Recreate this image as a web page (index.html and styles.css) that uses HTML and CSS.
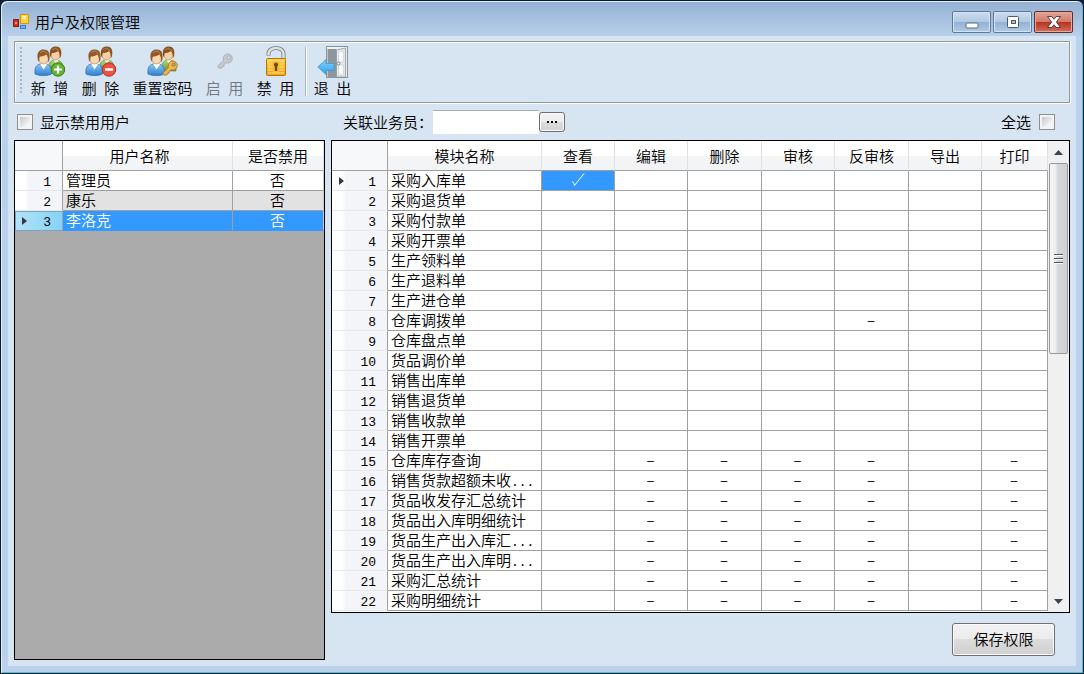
FILE: index.html
```html
<!DOCTYPE html>
<html lang="zh-CN">
<head>
<meta charset="utf-8">
<title>用户及权限管理</title>
<link rel="stylesheet" href="styles.css">
</head>
<body>
<svg class="defs" width="0" height="0" aria-hidden="true">
  <defs>
    <linearGradient id="blueBody" x1="0" y1="0" x2="0" y2="1"><stop offset="0" stop-color="#8cc8f4"/><stop offset="1" stop-color="#2f7fd0"/></linearGradient>
    <linearGradient id="greenBody" x1="0" y1="0" x2="0" y2="1"><stop offset="0" stop-color="#b4dc7c"/><stop offset="1" stop-color="#5d9a34"/></linearGradient>
    <linearGradient id="gold" x1="0" y1="0" x2="0" y2="1"><stop offset="0" stop-color="#ffd24a"/><stop offset="1" stop-color="#f0a010"/></linearGradient>
    <linearGradient id="arrowBlue" x1="0" y1="0" x2="0" y2="1"><stop offset="0" stop-color="#8ad4fc"/><stop offset="1" stop-color="#2f9ee6"/></linearGradient>
    <symbol id="users" viewBox="0 0 32 32">
      <path d="M15 25c-1-7 1-10 5-11h3c4 1 6 3 6 8v3z" fill="url(#greenBody)" stroke="#5a8a3a" stroke-width=".7"/>
      <path d="M19 13l3 5 3-5z" fill="#f4f4ec"/>
      <ellipse cx="21.500" cy="8.500" rx="4.600" ry="5.500" fill="#f6cfa0" stroke="#a87038" stroke-width=".5"/>
      <path d="M16 9c-1-6 2-8.500 6-8.500s6 3 5.200 8.500c-.4 2-1 3-1.400 3 .2-3-.3-5-1.800-7-2 1.500-4 2-6 2-.8 1-.8 3-.8 4-.8 0-1-1-1.200-2z" fill="#8a5425"/>
      <path d="M18 4c2-2 5-2 7 1" fill="none" stroke="#bd8750" stroke-width="1"/>
      <path d="M1 28c-.6-6 1-9 5-10h6c4 1 6 4 5.500 10-4 2-12 2-16.500 0z" fill="url(#blueBody)" stroke="#2868ac" stroke-width=".7"/>
      <path d="M6 17.500l3.500 6 4-6z" fill="#fff"/>
      <ellipse cx="9.500" cy="12" rx="5" ry="6" fill="#fad6aa" stroke="#a87038" stroke-width=".5"/>
      <path d="M3.700 13c-1.200-7 1.800-9.500 6-9.500 4.500 0 6.600 3 5.800 9.500-.3 2-.9 3-1.400 3 .2-3-.2-5.500-1.800-7.500-2 1.500-4.300 2-6.300 2-.8 1-.8 3.500-.8 5-.8 0-1.200-1.200-1.500-2.500z" fill="#8f5a2b"/>
      <path d="M6 7c2-2.500 5-2.500 7 .5" fill="none" stroke="#c38d55" stroke-width="1"/>
    </symbol>
    <symbol id="keyshape" viewBox="0 0 16 16">
      <path fill-rule="evenodd" d="M10.500 1c2.800 0 4.800 2 4.800 4.500S13.300 10 10.700 10c-.7 0-1.200-.1-1.700-.3L7.300 11.500l-.3 1.700-1.600.1-.3 1.500-3.100.4-1-1 .2-1.700 5.200-5C5.500 4 7.700 1 10.500 1zm1.200 2a1.600 1.600 0 1 0 0 3.200 1.600 1.600 0 0 0 0-3.200z"/>
    </symbol>
  </defs>
</svg>
<div class="window">
  <header class="titlebar">
    <svg class="app-icon" width="17" height="16" viewBox="0 0 17 16" aria-hidden="true">
      <rect x=".5" y="5.500" width="5" height="7" fill="#c8321e" stroke="#8c1c10"/>
      <rect x="2" y="8" width="2" height="2" fill="#f49a80"/>
      <rect x="7.500" y=".5" width="8" height="9" fill="#ffd23c" stroke="#d29a10"/>
      <rect x="9" y="2" width="4" height="3" fill="#fff0a0"/>
      <rect x="7.500" y="11.500" width="5" height="3" fill="#6ab0f0" stroke="#3a7ac8"/>
    </svg>
    <h1 class="title">用户及权限管理</h1>
    <div class="window-buttons">
      <button class="wbtn" type="button" aria-label="最小化"><svg width="14" height="14" viewBox="0 0 14 14"><rect x="1" y="8" width="12" height="5" rx="1" fill="#fff" stroke="#5b6b80"/></svg></button>
      <button class="wbtn" type="button" aria-label="最大化"><svg width="14" height="14" viewBox="0 0 14 14"><rect x="1.500" y="1.500" width="11" height="11" rx="1" fill="#fff" stroke="#4b5a70"/><rect x="5.500" y="5.500" width="4" height="3" fill="#a8bcd6" stroke="#4d5a6c"/></svg></button>
      <button class="wbtn wbtn-close" type="button" aria-label="关闭"><svg width="14" height="14" viewBox="0 0 14 14"><path d="M.5 1.500h4.300L7 4.200l2.200-2.700h4.300L9.400 7l4.100 5.500H9.200L7 9.800l-2.200 2.700H.5L4.600 7z" fill="#fff" stroke="#5e2a2a" stroke-width=".9"/></svg></button>
    </div>
  </header>

  <main class="client">
    <div class="toolbar" role="toolbar" aria-label="工具栏">
      <span class="grip"></span>
      <button class="tool" type="button">
        <svg width="32" height="32" viewBox="0 0 32 32"><use href="#users"/><circle cx="24" cy="23.500" r="6.700" fill="#62b52c" stroke="#3a7c18"/><path d="M24 19.500v8M20 23.500h8" stroke="#fff" stroke-width="2.200"/></svg>
        <span>新&ensp;增</span>
      </button>
      <button class="tool" type="button">
        <svg width="32" height="32" viewBox="0 0 32 32"><use href="#users"/><circle cx="24" cy="23.500" r="6.700" fill="#ea5446" stroke="#b42c22"/><path d="M20 23.500h8" stroke="#fff" stroke-width="2.400"/></svg>
        <span>删&ensp;除</span>
      </button>
      <button class="tool tool-wide" type="button">
        <svg width="32" height="32" viewBox="0 0 32 32"><use href="#users"/><use href="#keyshape" x="15" y="14" width="16" height="16" fill="#f0b450" stroke="#a66c1c" stroke-width=".8"/></svg>
        <span>重置密码</span>
      </button>
      <button class="tool" type="button" disabled>
        <svg width="32" height="32" viewBox="0 0 32 32"><use href="#keyshape" x="8" y="7" width="16" height="16" fill="#c6c9cd" stroke="#a3a7ac" stroke-width=".8"/></svg>
        <span>启&ensp;用</span>
      </button>
      <button class="tool" type="button">
        <svg width="32" height="32" viewBox="0 0 32 32"><path d="M8.500 9.500V8c0-8 15-8 15 0v5" fill="none" stroke="#777d84" stroke-width="4"/><path d="M8.500 9V8c0-8 15-8 15 0v5" fill="none" stroke="#dfe3e7" stroke-width="2.400"/><rect x="6.500" y="12.500" width="19" height="17" rx="1" fill="url(#gold)" stroke="#b87808"/><path d="M8 15h16M8 18h16M8 21h16M8 24h16M8 27h16" stroke="#ffe28a" stroke-width="1"/><rect x="12.500" y="15" width="7" height="11" fill="#fbbd28"/><path d="M16 16.500a2.200 2.200 0 0 1 1.200 4v4.500h-2.400v-4.500a2.200 2.200 0 0 1 1.200-4z" fill="#70480a"/></svg>
        <span>禁&ensp;用</span>
      </button>
      <span class="separator"></span>
      <button class="tool" type="button">
        <svg width="32" height="32" viewBox="0 0 32 32"><rect x="9.500" y=".5" width="21" height="31" fill="#eef1f2" stroke="#8a959a"/><rect x="10.500" y="3" width="9" height="28" fill="#8d979b"/><path d="M19.500 4l9-2v29h-9z" fill="#e4e9ea" stroke="#8a959a" stroke-width=".8"/><path d="M21.500 6l5-1v11h-5zM21.500 19h5v10h-5z" fill="#f8fafa" stroke="#c3cacc" stroke-width=".6"/><circle cx="21.500" cy="17.500" r="1.500" fill="#fff" stroke="#657076" stroke-width=".8"/><path d="M.8 21L9 13.500v4h8v7H9v4z" fill="url(#arrowBlue)" stroke="#3b9ad8" stroke-width=".8"/></svg>
        <span>退&ensp;出</span>
      </button>
    </div>

    <div class="columns">
      <section class="users-pane">
        <div class="filter filter-left">
          <input class="check" type="checkbox" id="showDisabled"><label for="showDisabled">显示禁用用户</label>
        </div>
        <div class="grid-box users-box">
          <table class="grid users">
            <colgroup><col class="u-num"><col class="u-name"><col class="u-off"></colgroup>
            <thead><tr><th></th><th class="sortable">用户名称</th><th>是否禁用</th></tr></thead>
            <tbody>
              <tr><th scope="row">1</th><td>管理员</td><td class="c">否</td></tr>
              <tr class="alt"><th scope="row">2</th><td>康乐</td><td class="c">否</td></tr>
              <tr class="selected"><th scope="row"><i class="marker"></i>3</th><td>李洛克</td><td class="c">否</td></tr>
            </tbody>
          </table>
        </div>
      </section>

      <section class="rights-pane">
        <div class="filter filter-right">
          <label for="salesman">关联业务员：</label>
          <input class="field" type="text" id="salesman">
          <button class="browse" type="button" aria-label="选择业务员"><svg width="12" height="4" viewBox="0 0 12 4"><path d="M1 1h2v2H1zM5 1h2v2H5zM9 1h2v2H9z"/></svg></button>
          <span class="select-all"><label for="all">全选</label><input class="check" type="checkbox" id="all"></span>
        </div>
        <div class="grid-box rights-box">
          <table class="grid rights">
            <colgroup><col class="r-num"><col class="r-name"><col class="r-a"><col class="r-a"><col class="r-b"><col class="r-a"><col class="r-b"><col class="r-a"><col class="r-end"></colgroup>
            <thead><tr><th></th><th>模块名称</th><th>查看</th><th>编辑</th><th>删除</th><th>审核</th><th>反审核</th><th>导出</th><th>打印</th></tr></thead>
            <tbody>
              <tr><th scope="row"><i class="marker"></i>1</th><td>采购入库单</td><td class="c current"><svg class="tick" width="14" height="15" viewBox="0 0 14 15" role="img" aria-label="有权限"><path d="M1 9.500c1.200.5 2 1.500 2.500 4L13 1.500" fill="none" stroke="#fff"/></svg></td><td></td><td></td><td></td><td></td><td></td><td></td></tr>
              <tr><th scope="row">2</th><td>采购退货单</td><td></td><td></td><td></td><td></td><td></td><td></td><td></td></tr>
              <tr><th scope="row">3</th><td>采购付款单</td><td></td><td></td><td></td><td></td><td></td><td></td><td></td></tr>
              <tr><th scope="row">4</th><td>采购开票单</td><td></td><td></td><td></td><td></td><td></td><td></td><td></td></tr>
              <tr><th scope="row">5</th><td>生产领料单</td><td></td><td></td><td></td><td></td><td></td><td></td><td></td></tr>
              <tr><th scope="row">6</th><td>生产退料单</td><td></td><td></td><td></td><td></td><td></td><td></td><td></td></tr>
              <tr><th scope="row">7</th><td>生产进仓单</td><td></td><td></td><td></td><td></td><td></td><td></td><td></td></tr>
              <tr><th scope="row">8</th><td>仓库调拨单</td><td></td><td></td><td></td><td></td><td class="c">–</td><td></td><td></td></tr>
              <tr><th scope="row">9</th><td>仓库盘点单</td><td></td><td></td><td></td><td></td><td></td><td></td><td></td></tr>
              <tr><th scope="row">10</th><td>货品调价单</td><td></td><td></td><td></td><td></td><td></td><td></td><td></td></tr>
              <tr><th scope="row">11</th><td>销售出库单</td><td></td><td></td><td></td><td></td><td></td><td></td><td></td></tr>
              <tr><th scope="row">12</th><td>销售退货单</td><td></td><td></td><td></td><td></td><td></td><td></td><td></td></tr>
              <tr><th scope="row">13</th><td>销售收款单</td><td></td><td></td><td></td><td></td><td></td><td></td><td></td></tr>
              <tr><th scope="row">14</th><td>销售开票单</td><td></td><td></td><td></td><td></td><td></td><td></td><td></td></tr>
              <tr><th scope="row">15</th><td>仓库库存查询</td><td></td><td class="c">–</td><td class="c">–</td><td class="c">–</td><td class="c">–</td><td></td><td class="c">–</td></tr>
              <tr><th scope="row">16</th><td>销售货款超额未收<span class="dots">...</span></td><td></td><td class="c">–</td><td class="c">–</td><td class="c">–</td><td class="c">–</td><td></td><td class="c">–</td></tr>
              <tr><th scope="row">17</th><td>货品收发存汇总统计</td><td></td><td class="c">–</td><td class="c">–</td><td class="c">–</td><td class="c">–</td><td></td><td class="c">–</td></tr>
              <tr><th scope="row">18</th><td>货品出入库明细统计</td><td></td><td class="c">–</td><td class="c">–</td><td class="c">–</td><td class="c">–</td><td></td><td class="c">–</td></tr>
              <tr><th scope="row">19</th><td>货品生产出入库汇<span class="dots">...</span></td><td></td><td class="c">–</td><td class="c">–</td><td class="c">–</td><td class="c">–</td><td></td><td class="c">–</td></tr>
              <tr><th scope="row">20</th><td>货品生产出入库明<span class="dots">...</span></td><td></td><td class="c">–</td><td class="c">–</td><td class="c">–</td><td class="c">–</td><td></td><td class="c">–</td></tr>
              <tr><th scope="row">21</th><td>采购汇总统计</td><td></td><td class="c">–</td><td class="c">–</td><td class="c">–</td><td class="c">–</td><td></td><td class="c">–</td></tr>
              <tr><th scope="row">22</th><td>采购明细统计</td><td></td><td class="c">–</td><td class="c">–</td><td class="c">–</td><td class="c">–</td><td></td><td class="c">–</td></tr>
            </tbody>
          </table>
          <div class="scrollbar">
            <button class="arrow" type="button" aria-label="向上滚动"><svg width="9" height="5" viewBox="0 0 9 5"><path d="M0 5l4.500-5L9 5z" fill="#3c4650"/></svg></button>
            <div class="track"><div class="thumb"><i></i><i></i><i></i></div></div>
            <button class="arrow" type="button" aria-label="向下滚动"><svg width="9" height="5" viewBox="0 0 9 5"><path d="M0 0l4.500 5L9 0z" fill="#3c4650"/></svg></button>
          </div>
        </div>
        <div class="actions"><button class="save" type="button">保存权限</button></div>
      </section>
    </div>
  </main>
</div>
</body>
</html>
```
FILE: styles.css
```css
* { box-sizing: border-box; }

body {
  margin: 0;
  background: #10203c;
  color: #000;
  font: 350 15px/18px "Noto Sans CJK SC", sans-serif;
}

button, input { font: inherit; color: inherit; margin: 0; padding: 0; }
.defs { position: absolute; }

.window {
  display: flex;
  flex-direction: column;
  min-height: 100vh;
  padding: 0 7px 7px;
  border: 1px solid #0c1c30;
  border-radius: 7px 7px 0 0;
  background: linear-gradient(#93b0d3, #b9d1ea 36px, #b9d1ea);
  box-shadow: inset 1px 1px #e4f0fa, inset -1px -1px #4cc4d8;
}

.titlebar {
  display: flex;
  align-items: center;
  height: 35px;
  padding: 6px 3px 0 5px;
}
.title { margin: 0 auto 0 5px; font-size: 15px; font-weight: 350; }
.window-buttons { display: flex; gap: 2px; }
.wbtn {
  display: flex;
  align-items: center;
  justify-content: center;
  width: 39px;
  height: 22px;
  border: 1px solid #5f7896;
  border-radius: 2px;
  background: linear-gradient(#cbdcef, #b3cae4 48%, #93b1d3 50%, #b0cbe8);
  box-shadow: inset 0 0 0 1px #d5e4f3;
}
.wbtn svg { flex: none; }
.wbtn-close {
  border-color: #6a2a2a;
  background: linear-gradient(#e3a497, #d27a6a 48%, #b8311b 50%, #d2705c);
  box-shadow: inset 0 0 0 1px #e4aca0;
}

.client {
  flex: 1;
  display: flex;
  flex-direction: column;
  padding: 5px;
  border: 1px solid #d0e2f3;
  border-top: 0;
  background: #d7e4f1;
}

.toolbar {
  display: flex;
  height: 62px;
  padding: 4px 4px 3px;
  border: 1px solid #8f979f;
  box-shadow: inset 1px 1px #fff, 0 1px #fff, 1px 0 #fff;
}
.grip {
  width: 5px;
  margin: 0 0 5px;
  background: radial-gradient(circle at 2px 2px, #a9b7c6 1px, transparent 1px) 0 0 / 5px 4px;
}
.tool {
  display: flex;
  flex-direction: column;
  align-items: center;
  justify-content: flex-start;
  gap: 1px;
  width: 51px;
  border: 0;
  background: none;
}
.tool-wide { width: 73px; }
.tool:disabled { color: #737980; }
.tool svg { flex: none; }
.separator { width: 2px; margin: 1px 0 3px 4px; border-left: 1px solid #a5b3c3; border-right: 1px solid #fff; }

.columns {
  flex: 1;
  display: grid;
  grid-template-columns: 311px minmax(0, 1fr);
  gap: 6px;
}
.users-pane, .rights-pane { display: flex; flex-direction: column; min-width: 0; }

.filter { display: flex; align-items: center; height: 37px; }
.filter-left { gap: 7px; padding: 0 3px; }
.filter-right { padding: 0 15px 0 12px; }
.select-all { display: flex; align-items: center; gap: 8px; margin-left: auto; }

.check {
  appearance: none;
  width: 16px;
  height: 16px;
  border: 1px solid #8e8f8f;
  background: linear-gradient(135deg, #c4c8cd, #f6f6f6 80%) content-box, #f4f4f4;
  padding: 2px;
}
.field {
  width: 106px;
  height: 24px;
  border: 0;
  border-top: 1px solid #abadb3;
  background: #fff;
}
.browse {
  display: flex;
  align-items: center;
  justify-content: center;
  width: 26px;
  height: 20px;
  border: 1px solid #707070;
  border-radius: 3px;
  background: linear-gradient(#f4f4f4, #ececec 48%, #dddddd 50%, #d2d2d2);
  box-shadow: inset 0 0 0 1px #fafafa;
}

.grid-box { border: 1px solid #000; }
.users-box { flex: 1; background: #ababab; }
.rights-box { display: flex; background: #fff; }

.grid {
  width: 100%;
  height: max-content;
  table-layout: fixed;
  border-spacing: 0;
  background: #fff;
}
.rights { flex: 1; min-width: 0; margin-bottom: 1px; }
.u-num { width: 48px; }
.u-name { width: 170px; }
.u-off { width: 91px; }
.r-num { width: 56px; }
.r-name { width: 154px; }
.r-a { width: 73px; }
.r-b { width: 74px; }
.r-end { width: 66px; }

.grid thead th {
  height: 30px;
  padding: 0;
  border-right: 1px solid #dfe1e4;
  border-bottom: 1px solid #a0a0a0;
  background: linear-gradient(#fff 50%, #f4f5f7 52%, #f2f3f5);
  font-weight: 350;
}
.grid thead .sortable { padding-right: 16px; }
.grid thead th:first-child { border-right-color: #a0a0a0; background: #f7f8fa; }
.grid tbody th {
  position: relative;
  height: 20px;
  padding: 4px 11px 0 0;
  border-right: 1px solid #a0a0a0;
  border-bottom: 1px solid #e6e8eb;
  background: linear-gradient(90deg, #fff 10px, #f4f5f8 14px);
  font: 400 13px/15px "Liberation Mono", monospace;
  text-align: right;
}
.grid td {
  height: 20px;
  padding: 0 0 2px 3px;
  border-right: 1px solid #a0a0a0;
  border-bottom: 1px solid #a0a0a0;
  line-height: 17px;
  white-space: nowrap;
}
.grid .c { padding: 0 1px 2px 0; text-align: center; }
.tick { display: block; margin: 0 auto; }
.dots { font: 13px/1px "Liberation Mono", monospace; }
.alt td { background: #e2e2e2; }
.selected td, .grid .current { background: #3399ff; color: #fff; }
.selected td { border-bottom-color: #3399ff; }
.users td:last-child { border-right-color: #c8c8c8; }
.grid .selected th { border-bottom-color: #7aa6bc; background: linear-gradient(90deg, #b2e2f8, #86d2f6); box-shadow: inset 1px 1px #76a8c0; }
.marker {
  position: absolute;
  left: 7px;
  top: 6px;
  border: 4px solid transparent;
  border-left: 5px solid #303840;
  border-right: 0;
}

.scrollbar {
  display: flex;
  flex-direction: column;
  flex: none;
  width: 21px;
  background: #f0f0f0;
}
.arrow {
  display: flex;
  align-items: center;
  justify-content: center;
  height: 22px;
  border: 0;
  background: none;
}
.track { flex: 1; }
.thumb {
  display: flex;
  flex-direction: column;
  align-items: center;
  justify-content: center;
  gap: 2px;
  height: 191px;
  margin: 0 1px;
  border: 1px solid #98999d;
  border-radius: 2px;
  background: linear-gradient(90deg, #f6f6f6, #ececee 35%, #d6d7da 45%, #cfd0d4);
}
.thumb i { width: 9px; height: 2px; border-top: 1px solid #50545a; border-bottom: 1px solid #fff; }

.actions { display: flex; justify-content: flex-end; padding: 10px 15px 4px 0; }
.save {
  width: 103px;
  height: 33px;
  padding-bottom: 2px;
  border: 1px solid #707070;
  border-radius: 3px;
  background: linear-gradient(#f3f3f3, #ebebeb 48%, #dcdcdc 50%, #cfcfcf);
  box-shadow: inset 0 0 0 1px #fafafa;
}
```
